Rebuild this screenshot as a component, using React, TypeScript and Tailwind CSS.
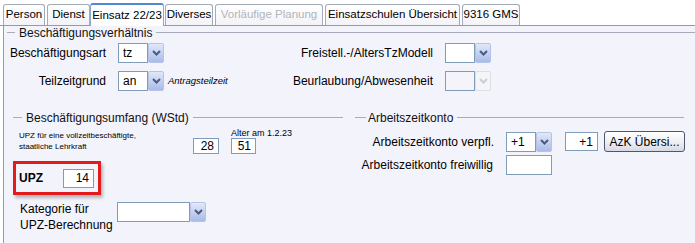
import React from "react";

const font = { fontFamily: '"Liberation Sans", Arial, sans-serif' };

function Chevron({ disabled }: { disabled?: boolean }) {
  return (
    <svg width="9" height="6" viewBox="0 0 9 6">
      <path
        d="M1 1 L4.5 4.5 L8 1"
        fill="none"
        stroke={disabled ? "#c9ccd6" : "#4a5b7e"}
        strokeWidth="2"
      />
    </svg>
  );
}

function Field({
  value,
  className,
}: {
  value?: string;
  className: string;
}) {
  return (
    <div
      className={
        "flex items-center justify-end border border-[#7f9db9] bg-white pr-[4px] text-[12px] text-black " +
        className
      }
    >
      {value}
    </div>
  );
}

function Combo({
  value,
  width,
  disabled,
}: {
  value?: string;
  width: string;
  disabled?: boolean;
}) {
  return (
    <div className="flex h-[20px]">
      <div
        className={
          "flex h-[20px] items-center border border-[#7f9db9] pl-[4px] text-[12px] text-black " +
          (disabled ? "bg-[#f4f4fa] " : "bg-white ") +
          width
        }
      >
        {value}
      </div>
      <div
        className={
          "flex h-[20px] w-[16px] items-center justify-center rounded-[2px] border " +
          (disabled
            ? "border-[#dcdde6] bg-[#f5f5f8]"
            : "border-[#b5c3e6] bg-gradient-to-b from-[#e1e8fa] to-[#a9bbe8]")
        }
      >
        <Chevron disabled={disabled} />
      </div>
    </div>
  );
}

function Tab({
  label,
  selected,
  disabled,
  className,
}: {
  label: string;
  selected?: boolean;
  disabled?: boolean;
  className: string;
}) {
  if (selected) {
    return (
      <div
        className={
          "relative z-10 -mb-px flex h-[23px] items-center justify-center rounded-t-[3px] border border-b-0 border-[#91a7c9] border-t-2 border-t-[#4f8ad6] bg-white text-[11.5px] text-black " +
          className
        }
      >
        {label}
      </div>
    );
  }
  return (
    <div
      className={
        "flex h-[21px] items-center justify-center rounded-t-[3px] border border-b-0 border-[#a3aab8] bg-gradient-to-b from-white to-[#f3f3f8] text-[11.5px] " +
        (disabled ? "text-[#b3b3b8] " : "text-black ") +
        className
      }
    >
      {label}
    </div>
  );
}

function SectionTitle({
  title,
  lead,
  gap,
  className,
}: {
  title: string;
  lead: string;
  gap: string;
  className: string;
}) {
  return (
    <div className={"flex h-[13px] items-center " + className}>
      <div className={"h-px bg-[#a7abbb] " + lead} />
      <span className={"whitespace-nowrap text-[12px] leading-none text-[#111] " + gap}>
        {title}
      </span>
      <div className="ml-[4px] h-px flex-1 bg-[#a7abbb]" />
    </div>
  );
}

export default function App() {
  return (
    <div
      className="flex h-[243px] w-[695px] flex-col overflow-hidden bg-white"
      style={font}
    >
      {/* tab strip */}
      <div className="flex h-[26px] items-end border-b border-[#919bb0] pl-[3px]">
        <Tab label="Person" className="w-[42px]" />
        <Tab label="Dienst" className="ml-[2px] w-[43px]" />
        <Tab label="Einsatz 22/23" selected className="w-[74px]" />
        <Tab label="Diverses" className="ml-[1px] w-[48px]" />
        <Tab label="Vorläufige Planung" disabled className="ml-[2px] w-[108px]" />
        <Tab label="Einsatzschulen Übersicht" className="ml-[2px] w-[135px]" />
        <Tab label="9316 GMS" className="ml-[2px] w-[58px]" />
      </div>

      {/* panel */}
      <div className="ml-[3px] flex flex-1 flex-col border-l border-[#919bb0] bg-[#f3f3fc] text-black">
        <SectionTitle
          title="Beschäftigungsverhältnis"
          lead="ml-[3px] w-[8px]"
          gap="ml-[4px]"
          className="mt-0"
        />

        {/* row 1 */}
        <div className="mt-[4px] flex h-[20px] items-center">
          <div className="w-[102px] text-right text-[12px]">Beschäftigungsart</div>
          <div className="ml-[12px]">
            <Combo value="tz" width="w-[30px]" />
          </div>
          <div className="w-[269px] text-right text-[12px]">Freistell.-/AltersTzModell</div>
          <div className="ml-[12px]">
            <Combo width="w-[30px]" />
          </div>
        </div>

        {/* row 2 */}
        <div className="mt-[8px] flex h-[20px] items-center">
          <div className="w-[102px] text-right text-[12px]">Teilzeitgrund</div>
          <div className="ml-[12px]">
            <Combo value="an" width="w-[30px]" />
          </div>
          <div className="flex w-[269px] items-center justify-between text-[12px]">
            <span className="ml-[4px] text-[9.5px] italic">Antragsteilzeit</span>
            <span>Beurlaubung/Abwesenheit</span>
          </div>
          <div className="ml-[12px]">
            <Combo width="w-[30px]" disabled />
          </div>
        </div>

        {/* lower sections */}
        <div className="mt-[20px] flex">
          {/* left: Beschäftigungsumfang */}
          <div className="flex w-[340px] flex-col">
            <SectionTitle
              title="Beschäftigungsumfang (WStd)"
              lead="ml-[9px] w-[9px]"
              gap="ml-[4px]"
              className="pr-[1px]"
            />

            <div className="mt-[5px] flex items-end">
              <div className="ml-[15px] mb-[2px] w-[174px] self-end text-[8px] leading-[11px]">
                UPZ für eine vollzeitbeschäftigte,
                <br />
                staatliche Lehrkraft
              </div>
              <Field value="28" className="h-[16px] w-[26px]" />
              <div className="ml-[12px] flex flex-col">
                <div className="h-[9px] whitespace-nowrap text-[9px] leading-[9px]">
                  Alter am 1.2.23
                </div>
                <Field value="51" className="h-[16px] w-[25px]" />
              </div>
            </div>

            <div className="ml-[9px] mt-[7px] flex h-[34px] w-[88px] items-center border-[3px] border-[#e31b1b] pl-[3px] pr-[4px] shadow-[2px_3px_3px_rgba(0,0,0,0.25)]">
              <span className="text-[12px] font-bold">UPZ</span>
              <Field value="14" className="ml-auto h-[19px] w-[31px]" />
            </div>

            <div className="mt-[6px] flex items-start">
              <div className="ml-[16px] w-[97px] text-[12px] leading-[16px]">
                Kategorie für
                <br />
                UPZ-Berechnung
              </div>
              <div className="mt-[1px]">
                <Combo width="w-[73px]" />
              </div>
            </div>
          </div>

          {/* right: Arbeitszeitkonto */}
          <div className="flex flex-1 flex-col">
            <SectionTitle
              title="Arbeitszeitkonto"
              lead="ml-[11px] w-[11px]"
              gap="ml-[2px]"
              className="pr-[11px]"
            />

            <div className="mt-[7px] flex h-[21px] items-center">
              <div className="w-[150px] text-right text-[12px]">Arbeitszeitkonto verpfl.</div>
              <div className="ml-[12px]">
                <Combo value="+1" width="w-[30px]" />
              </div>
              <Field value="+1" className="ml-[13px] h-[19px] w-[33px]" />
              <button className="ml-[6px] h-[21px] w-[81px] rounded-[3px] border border-[#4c5870] bg-gradient-to-b from-white via-[#f0f0f5] to-[#d6d8e4] text-[12px] text-black">
                AzK Übersi...
              </button>
            </div>

            <div className="mt-[3px] flex h-[20px] items-center">
              <div className="w-[149px] text-right text-[12px]">Arbeitszeitkonto freiwillig</div>
              <Field className="ml-[13px] h-[20px] w-[46px]" />
            </div>
          </div>
        </div>
      </div>
    </div>
  );
}
